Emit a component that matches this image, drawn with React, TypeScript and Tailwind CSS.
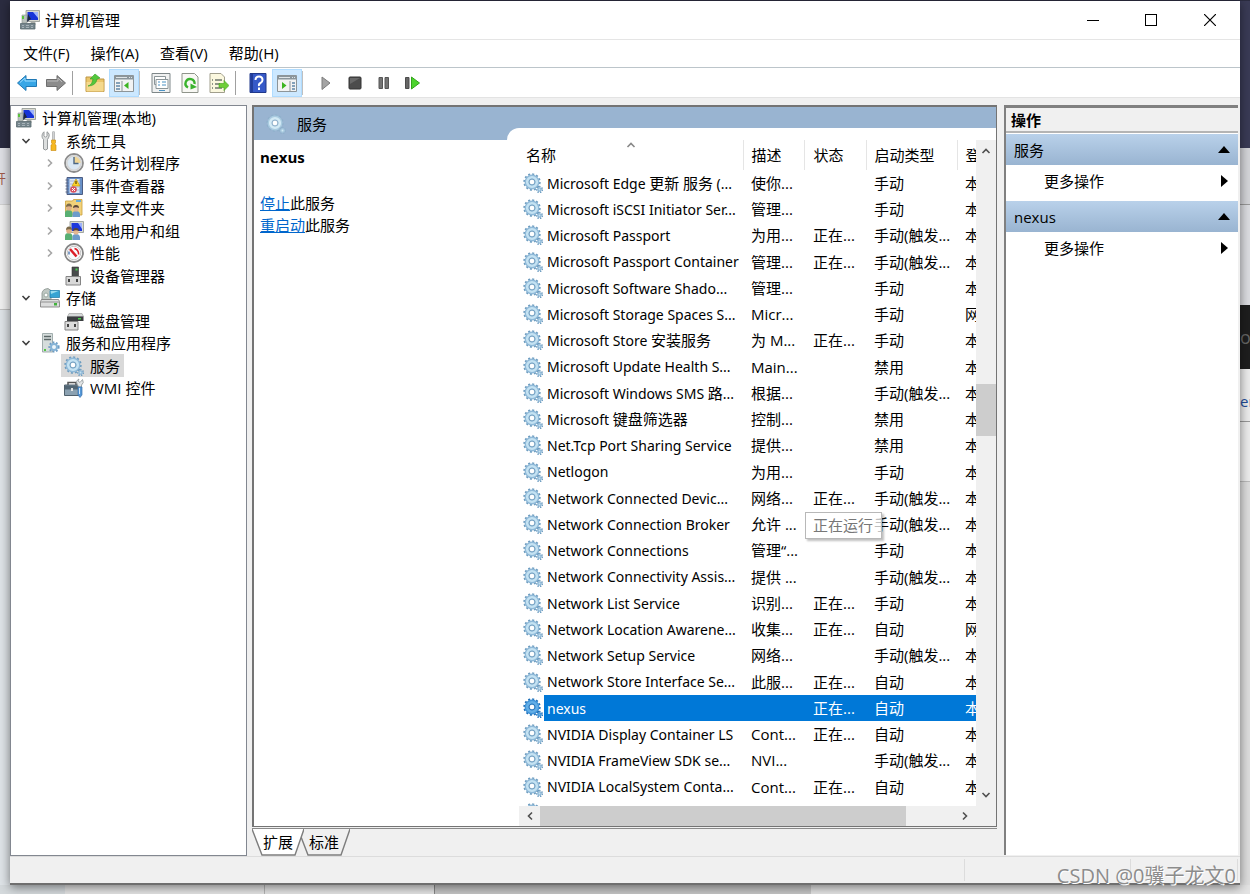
import type { ReactNode } from "react";

type TreeItem = {
  label: string;
  level: 0 | 1 | 2;
  icon: ReactNode;
  arrow?: "open" | "closed";
  selected?: boolean;
};

type Service = {
  name: string;
  description?: string;
  running?: boolean;
  startup: string;
  logon?: string;
  selected?: boolean;
  tooltip?: string;
};

function GearIcon({ tint = "#8fb9d8", ring = "#6d9cbf", face = "#c4e2f2" }) {
  return (
    <svg viewBox="0 0 20 20" className="block size-5">
      <circle cx="9" cy="9" r="7.7" fill="none" stroke={ring} strokeWidth="2" strokeDasharray="2 2.03" />
      <circle cx="9" cy="9" r="5.2" fill="none" stroke={tint} strokeWidth="4.4" />
      <circle cx="9" cy="9" r="4.8" fill="none" stroke={face} strokeWidth="2.6" />
      <circle cx="9" cy="9" r="2.9" fill="#fff" stroke={ring} strokeWidth="1" />
      <circle cx="16.500" cy="16.500" r="2.800" fill="none" stroke={ring} strokeWidth="1.8" strokeDasharray="1.3 1.2" />
      <circle cx="16.500" cy="16.500" r="1.600" fill={face} stroke={tint} strokeWidth="1.4" />
    </svg>
  );
}

function ComputerIcon() {
  return (
    <svg viewBox="0 0 20 20" className="block size-5">
      <path d="M6 0.5h13.5v11H6z" fill="#d8d8cf" stroke="#8f9690" strokeWidth="0.8" />
      <path d="M7.5 2h10.5v8H7.5z" fill="#1733d8" />
      <path d="M13 2h5v6z" fill="#9fb4fb" />
      <path d="M11 11.500h4l1 3h-6z" fill="#a8aca8" />
      <path d="M2 5h5v8H2z" fill="#b9c1bd" stroke="#8c9691" strokeWidth="0.6" />
      <path d="M2 6h2v3H2z" fill="#5ac23c" />
      <path d="M8 4l3 5-4 3z" fill="#1d2742" />
      <path d="M0.500 13.500h14.500v5.500H0.500z" fill="#75858c" stroke="#596970" strokeWidth="0.8" />
      <path d="M2 15.500h2M6 15.500h3M11 15.500h2M2 17.500h2M6 17.500h3M11 17.500h2" stroke="#a6b2b8" />
    </svg>
  );
}

function ToolsIcon() {
  return (
    <svg viewBox="0 0 20 20" className="block size-5">
      <path d="M4 0.800v4l1.500 1.500 1.500-1.500v-4c2 1 3 3.500 1.500 6L7.500 8.500V18q-2 2-4 0V8.500C1 6 2 2.500 4 0.800z" fill="#dcdede" stroke="#8b8f91" strokeWidth="0.9" />
      <path d="M13.500 0.500v9" stroke="#8b8f91" strokeWidth="2.2" />
      <path d="M13.500 1v8" stroke="#e3e3e3" strokeWidth="0.8" />
      <path d="M11.500 9h4v3l-1 1 1.500 1v5.500h-5V14l1.500-1-1-1z" fill="#f6b820" stroke="#c98a0a" strokeWidth="0.6" />
    </svg>
  );
}

function ClockIcon() {
  return (
    <svg viewBox="0 0 20 20" className="block size-5">
      <circle cx="10" cy="10" r="9" fill="#f2f7fb" stroke="#8c8c8c" strokeWidth="1.8" />
      <circle cx="10" cy="10" r="7.200" fill="#dbe8f3" stroke="#d5d5d5" strokeWidth="1.600" />
      <path d="M10 3.500a6.500 6.500 0 0 1 6.500 6.500H10z" fill="#f1d696" />
      <path d="M10 4v6.500h4.500" fill="none" stroke="#4b6784" strokeWidth="1.400" />
    </svg>
  );
}

function EventIcon() {
  return (
    <svg viewBox="0 0 20 20" className="block size-5">
      <path d="M3 1.500h15.500v17H3z" fill="#6890c7" stroke="#4c5d83" />
      <path d="M5.500 3h10v14h-10z" fill="#dfe7f5" />
      <path d="M6 5h9M6 8h9M6 11h9M6 14h9" stroke="#a9b8d6" />
      <path d="M1.500 4h3M1.500 7h3M1.500 10h3M1.500 13h3M1.500 16h3" stroke="#586784" />
      <path d="M12 3l4 7H8z" fill="#ffd42c" stroke="#bb9204" strokeWidth="0.600" />
      <path d="M12 5v3" stroke="#302500" />
      <circle cx="9.500" cy="13.500" r="3.300" fill="#d95360" />
      <path d="M8 12l3 3M11 12l-3 3" stroke="#fff" />
    </svg>
  );
}

function People() {
  return (
    <>
      <path d="M1 19v-4q0-3 3.500-3t4 3v4z" fill="#58af73" />
      <circle cx="5" cy="9.800" r="2.800" fill="#dfb087" />
      <path d="M2 9q0-3.500 3-3.500T8 9q-3-1.500-6 0z" fill="#7c6a4a" />
      <path d="M8.500 19v-3q0-3 3.500-3t4 3v3z" fill="#6c9bcb" />
      <circle cx="12" cy="11" r="2.600" fill="#e5b890" />
      <path d="M9 10q0-3 3-3t3 3q-3-1.300-6 0z" fill="#594639" />
    </>
  );
}

function SharedFolderIcon() {
  return (
    <svg viewBox="0 0 20 20" className="block size-5">
      <path d="M1.500 3h7l1-1.500h8.500V17H1.500z" fill="#f2d27a" stroke="#c99f3b" strokeWidth="0.800" />
      <path d="M12 2h5v2h-5z" fill="#67acd9" />
      <People />
    </svg>
  );
}

function UsersIcon() {
  return (
    <svg viewBox="0 0 20 20" className="block size-5">
      <path d="M6 0.500h13.500v11H6z" fill="#d7d9d2" stroke="#8f9690" strokeWidth="0.800" />
      <path d="M7.500 2H18v8H7.500z" fill="#1d38dc" />
      <path d="M14 2h4v6z" fill="#9fb2fa" />
      <People />
    </svg>
  );
}

function GaugeIcon() {
  return (
    <svg viewBox="0 0 20 20" className="block size-5">
      <circle cx="10" cy="10" r="9" fill="#fff" stroke="#858585" strokeWidth="1.800" />
      <circle cx="10" cy="10" r="6.800" fill="#f9fbfd" stroke="#c5c5c5" />
      <path d="M6 6l6.500 7.500" stroke="#dc1d27" strokeWidth="2.500" />
      <path d="M10.500 5.500q4 1 4.200 6" fill="none" stroke="#dc1d27" strokeWidth="1.600" />
      <path d="M5 8.500v3" stroke="#4b74ad" strokeWidth="1.400" />
    </svg>
  );
}

function DeviceIcon() {
  return (
    <svg viewBox="0 0 20 20" className="block size-5">
      <path d="M8 1h6.500v10H8z" fill="#484b4c" stroke="#333" strokeWidth="0.600" />
      <path d="M11.500 2.500h2v2h-2z" fill="#48d451" />
      <path d="M2 10.500h14.500v8.500H2z" fill="#d8d8d8" stroke="#858585" />
      <path d="M5 13v3M13 13v3" stroke="#333" strokeWidth="1.800" />
    </svg>
  );
}

function StorageIcon() {
  return (
    <svg viewBox="0 0 20 20" className="block size-5">
      <path d="M2 8q-1-7 6-7.500l3 2V12H2z" fill="#bfc8c3" stroke="#87918b" strokeWidth="0.800" />
      <circle cx="6" cy="7" r="2" fill="#fff" stroke="#9baaa2" />
      <path d="M10 2.500h9.500v7H10z" fill="#36a4d3" stroke="#187aa9" strokeWidth="0.700" />
      <path d="M10.500 3h8L11 6z" fill="#98dbed" />
      <path d="M1.500 11.500h17l1 2v5.500h-19v-5.500z" fill="#dcdddd" stroke="#777" strokeWidth="0.800" />
      <path d="M1 14h18" stroke="#929292" />
      <path d="M14 15h3v2.500h-3z" fill="#43b33d" />
    </svg>
  );
}

function DiskIcon() {
  return (
    <svg viewBox="0 0 20 20" className="block size-5">
      <path d="M5 2.500h13l1.500 3H3.500z" fill="#d5d8d8" stroke="#999" strokeWidth="0.600" />
      <path d="M3 5.500h16.500V10H3z" fill="#3b3e40" />
      <path d="M14 7h3v1.500h-3z" fill="#46ce48" />
      <path d="M1 10.500h13v8.500H1z" fill="#dcdcdc" stroke="#858585" />
      <path d="M4 13v3M11 13v3" stroke="#333" strokeWidth="1.800" />
    </svg>
  );
}

function ServerIcon() {
  return (
    <svg viewBox="0 0 20 20" className="block size-5">
      <path d="M2.500 0.500h10V19h-10z" fill="#d6dddc" stroke="#99a5a5" strokeWidth="0.900" />
      <path d="M4 3.500h7M4 6.500h7" stroke="#5b6767" strokeWidth="1.400" />
      <path d="M4 17h2" stroke="#50c642" strokeWidth="1.800" />
      <circle cx="14" cy="14" r="4.600" fill="none" stroke="#6b9bc4" strokeWidth="2" strokeDasharray="1.700 1.600" />
      <circle cx="14" cy="14" r="3" fill="#eef6fb" stroke="#85b3d6" strokeWidth="2" />
    </svg>
  );
}

function WmiIcon() {
  return (
    <svg viewBox="0 0 20 20" className="block size-5">
      <path d="M4 7V4.500h8V7" fill="none" stroke="#555" strokeWidth="1.500" />
      <path d="M0.500 7h16v10.500h-16z" fill="#8ba1b1" stroke="#50616d" />
      <path d="M1 7.500h15v4H1z" fill="#526674" />
      <path d="M7 10h2v3H7z" fill="#e5e5e5" />
      <path d="M18.500 1.500l-2.500 3-2-1.500 1-2q-4 2-1.500 5.500l1 2.500h3V7q3-2 1-5.500z" fill="#e2e5e6" stroke="#8f979b" strokeWidth="0.800" />
      <path d="M14 9h4v8l-2 2.500-2-2.500z" fill="#5598d8" stroke="#3970aa" strokeWidth="0.700" />
      <path d="M15.500 10v6" stroke="#d3e8fa" />
    </svg>
  );
}

function Chevron({ d, className }: { d: string; className?: string }) {
  return (
    <svg viewBox="0 0 10 10" className={`block size-[10px] ${className ?? ""}`}>
      <path d={d} fill="none" stroke="currentColor" strokeWidth="1.600" />
    </svg>
  );
}

const UP = "M1.500 7L5 3.500L8.500 7";
const DOWN = "M1.500 3L5 6.500L8.500 3";
const LEFT = "M7 1.500L3.500 5L7 8.500";
const RIGHT = "M3 1.500L6.500 5L3 8.500";

const tree: TreeItem[] = [
  { label: "计算机管理(本地)", level: 0, icon: <ComputerIcon /> },
  { label: "系统工具", level: 1, icon: <ToolsIcon />, arrow: "open" },
  { label: "任务计划程序", level: 2, icon: <ClockIcon />, arrow: "closed" },
  { label: "事件查看器", level: 2, icon: <EventIcon />, arrow: "closed" },
  { label: "共享文件夹", level: 2, icon: <SharedFolderIcon />, arrow: "closed" },
  { label: "本地用户和组", level: 2, icon: <UsersIcon />, arrow: "closed" },
  { label: "性能", level: 2, icon: <GaugeIcon />, arrow: "closed" },
  { label: "设备管理器", level: 2, icon: <DeviceIcon /> },
  { label: "存储", level: 1, icon: <StorageIcon />, arrow: "open" },
  { label: "磁盘管理", level: 2, icon: <DiskIcon /> },
  { label: "服务和应用程序", level: 1, icon: <ServerIcon />, arrow: "open" },
  { label: "服务", level: 2, icon: <GearIcon />, selected: true },
  { label: "WMI 控件", level: 2, icon: <WmiIcon /> },
];

const services: Service[] = [
  { name: "Microsoft Edge 更新 服务 (...", description: "使你...", startup: "手动" },
  { name: "Microsoft iSCSI Initiator Ser...", description: "管理...", startup: "手动" },
  { name: "Microsoft Passport", description: "为用...", running: true, startup: "手动(触发..." },
  { name: "Microsoft Passport Container", description: "管理...", running: true, startup: "手动(触发..." },
  { name: "Microsoft Software Shado...", description: "管理...", startup: "手动" },
  { name: "Microsoft Storage Spaces S...", description: "Micr...", startup: "手动", logon: "网" },
  { name: "Microsoft Store 安装服务", description: "为 M...", running: true, startup: "手动" },
  { name: "Microsoft Update Health S...", description: "Main...", startup: "禁用" },
  { name: "Microsoft Windows SMS 路...", description: "根据...", startup: "手动(触发..." },
  { name: "Microsoft 键盘筛选器", description: "控制...", startup: "禁用" },
  { name: "Net.Tcp Port Sharing Service", description: "提供...", startup: "禁用" },
  { name: "Netlogon", description: "为用...", startup: "手动" },
  { name: "Network Connected Devic...", description: "网络...", running: true, startup: "手动(触发..." },
  { name: "Network Connection Broker", description: "允许 ...", startup: "手动(触发...", tooltip: "正在运行" },
  { name: "Network Connections", description: "管理“...", startup: "手动" },
  { name: "Network Connectivity Assis...", description: "提供 ...", startup: "手动(触发..." },
  { name: "Network List Service", description: "识别...", running: true, startup: "手动" },
  { name: "Network Location Awarene...", description: "收集...", running: true, startup: "自动", logon: "网" },
  { name: "Network Setup Service", description: "网络...", startup: "手动(触发..." },
  { name: "Network Store Interface Se...", description: "此服...", running: true, startup: "自动" },
  { name: "nexus", running: true, startup: "自动", selected: true },
  { name: "NVIDIA Display Container LS", description: "Cont...", running: true, startup: "自动" },
  { name: "NVIDIA FrameView SDK se...", description: "NVI...", startup: "手动(触发..." },
  { name: "NVIDIA LocalSystem Conta...", description: "Cont...", running: true, startup: "自动" },
  { name: "Office 64 Source Engine", description: "保存...", startup: "手动(触发..." },
];

function TitleBar() {
  return (
    <header className="flex h-[39px] shrink-0 items-center border-b border-[#e5e5e5] bg-white pl-[10px]">
      <ComputerIcon />
      <h1 className="ml-[5px] flex-1">计算机管理</h1>
      <button aria-label="最小化" className="flex h-full w-[58px] items-center justify-center">
        <span className="h-px w-3 bg-black" />
      </button>
      <button aria-label="最大化" className="flex h-full w-[58px] items-center justify-center">
        <span className="size-3 border border-black" />
      </button>
      <button aria-label="关闭" className="flex h-full w-[60px] items-center justify-center">
        <svg viewBox="0 0 12 12" className="size-3">
          <path d="M0 0l12 12M12 0L0 12" stroke="#000" strokeWidth="1.200" />
        </svg>
      </button>
    </header>
  );
}

function MenuBar() {
  return (
    <nav className="flex h-7 shrink-0 items-center gap-[21px] border-b border-[#bcc5ca] bg-white pb-[2px] pl-[13px]">
      <button>文件(F)</button>
      <button>操作(A)</button>
      <button>查看(V)</button>
      <button>帮助(H)</button>
    </nav>
  );
}

function ToolButton({ label, active, children }: { label: string; active?: boolean; children: ReactNode }) {
  return (
    <button
      aria-label={label}
      className={`flex h-7 items-center justify-center border ${active ? "w-[30px] border-[#b0dcff] bg-[#cce8ff]" : "w-[29px] border-transparent"}`}
    >
      <svg viewBox="0 0 20 20" className="size-5">
        {children}
      </svg>
    </button>
  );
}

function Divider() {
  return <span className="mr-[7px] ml-[2px] h-6 w-px bg-[#a0a0a0]" />;
}

function PaneGlyph({ right }: { right?: boolean }) {
  return (
    <>
      <path d="M0.500 2.500h19v16h-19z" fill="#f2f3f3" stroke="#8d9599" />
      <path d="M1 3h18v3.500H1z" fill="#8b969c" />
      <path d="M2 4.500h11M15 4.500h1M17 4.500h1" stroke="#e0e5e7" />
      <path d={right ? "M13 8v10" : "M8 8v10"} stroke="#8d9599" />
      <path d={right ? "M15 10h3M15 13h3M15 16h3" : "M2 10h4M2 13h4M2 16h4"} stroke="#5f87a8" strokeWidth="1.300" />
      <path d={right ? "M5 9v7l4.500-3.500z" : "M14.500 9v7L10 12.500z"} fill="#3cb521" />
    </>
  );
}

function Toolbar() {
  return (
    <div className="flex h-[30px] shrink-0 items-center border-b border-[#e3e3e3] bg-white pl-[2px]">
      <ToolButton label="后退">
        <path d="M0.500 10L9 2.500v4h10.500v7H9v4z" fill="#37a6e6" stroke="#2078b4" />
        <path d="M3 9.500L8 5v3h11" fill="none" stroke="#9bdcff" />
      </ToolButton>
      <ToolButton label="前进">
        <path d="M19.500 10L11 2.500v4H0.500v7H11v4z" fill="#8c8c8c" stroke="#6e6e6e" />
        <path d="M1 8h11V5l4 4" fill="none" stroke="#bcbcbc" />
      </ToolButton>
      <Divider />
      <ToolButton label="向上">
        <path d="M1 4h6l2 2h10v12.500H1z" fill="#ebc66b" stroke="#bd9544" />
        <path d="M1.500 9h17v9.500h-17z" fill="#f4d98e" />
        <path d="M3 13q4-1 5-7H5l5-5 5 4-3 1q-1 7-9 7z" fill="#54c73c" stroke="#2f9e24" strokeWidth="0.600" />
      </ToolButton>
      <ToolButton label="显示/隐藏控制台树" active>
        <PaneGlyph />
      </ToolButton>
      <span className="mr-[6px] h-6 w-px bg-[#c0c0c0]" />
      <ToolButton label="属性">
        <path d="M1 0.500h18v19H1z" fill="#f0f1f1" stroke="#7e8789" />
        <path d="M3.500 3.500h11v8h-11z" fill="#fff" stroke="#8b9598" />
        <path d="M5 6.500h12v9H5z" fill="#fff" stroke="#8b9598" />
        <path d="M7 9h2M7 12h2M11 9h4M11 12h4M8 17.500h6" stroke="#4b92c4" />
      </ToolButton>
      <ToolButton label="刷新">
        <path d="M2 0.500h12.500l3.500 3.500v15.500H2z" fill="#f8f8f4" stroke="#8f948b" />
        <path d="M8 14.500A4.500 4.500 0 1 1 14.500 11" fill="none" stroke="#3ab32e" strokeWidth="2.400" />
        <path d="M10.500 16.500v-6l6.500 3.500z" fill="#3ab32e" />
      </ToolButton>
      <ToolButton label="导出列表">
        <path d="M1 0.500h11l3.500 3.500v15.500H1z" fill="#fbf8df" stroke="#a19f8d" />
        <path d="M3 7h1M6 7h7M3 11h1M6 11h5M3 15h1M6 15h7" stroke="#6f766e" strokeWidth="1.500" />
        <path d="M10 10.500h5v-3l5 5-5 5v-3h-5z" fill="#6fce38" stroke="#43a41e" strokeWidth="0.600" />
      </ToolButton>
      <Divider />
      <ToolButton label="帮助">
        <path d="M2 0.500h16v19H2z" fill="#3659c8" stroke="#20388b" />
        <path d="M2.500 1h2.500v18H2.500z" fill="#223d9a" />
        <path d="M7.500 7q0-3.500 3.500-3.500T14.500 7q0 2-2 3t-1.500 3M11 14.500v2.500" fill="none" stroke="#fff" strokeWidth="2" />
      </ToolButton>
      <ToolButton label="显示/隐藏操作窗格" active>
        <PaneGlyph right />
      </ToolButton>
      <span className="mr-2 h-6 w-px bg-[#c0c0c0]" />
      <ToolButton label="启动服务">
        <path d="M6 4l8 6-8 6.500z" fill="#a4a4a4" stroke="#7d7d7d" />
      </ToolButton>
      <ToolButton label="停止服务">
        <rect x="4" y="4" width="12" height="12" rx="1" fill="#4c4c4c" stroke="#333" />
        <path d="M5 5h10L5 11z" fill="#686868" />
      </ToolButton>
      <ToolButton label="暂停服务">
        <path d="M5 4.500h3.500v11H5zM11 4.500h3.500v11H11z" fill="#747474" stroke="#565656" />
      </ToolButton>
      <ToolButton label="重新启动服务">
        <path d="M2.500 4.500H6v11H2.500z" fill="#666" stroke="#4c4c4c" />
        <path d="M8.500 4l8 6-8 6z" fill="#4cd32d" stroke="#33a51b" />
      </ToolButton>
    </div>
  );
}

const indent = { 0: "pl-[2px]", 1: "pl-[7px]", 2: "pl-[31px]" };

function ConsoleTree() {
  return (
    <aside className="w-[237px] shrink-0 border border-[#828790] bg-white pt-px">
      <ul>
        {tree.map((item) => (
          <li key={item.label} className={`flex h-[22px] items-center gap-[3px] even:h-[23px] ${indent[item.level]}`}>
            {item.level > 0 && (
              <span className="flex w-4 justify-center">
                {item.arrow === "open" && <Chevron d={DOWN} className="text-[#404040]" />}
                {item.arrow === "closed" && <Chevron d={RIGHT} className="text-[#a6a6a6]" />}
              </span>
            )}
            <button className={`flex h-full items-center gap-[6px] pr-1 pl-[3px] ${item.selected ? "bg-[#d9d9d9]" : ""}`}>
              {item.icon}
              {item.label}
            </button>
          </li>
        ))}
      </ul>
    </aside>
  );
}

// Latin runs are set a little smaller than the Chinese ones
function ServiceName({ name }: { name: string }) {
  return name.split(/([\u4e00-\u9fff]+)/).map((part, i) => (
    <span key={i} className={i % 2 ? "" : "font-['Noto_Sans',sans-serif] text-[14px]"}>
      {part}
    </span>
  ));
}

function ServiceRow({ service }: { service: Service }) {
  const fill = service.selected ? "bg-[#0078d7] text-white" : "";
  return (
    <tr className="h-[26px] nth-[4n]:h-[27px]">
      <td className="pl-1">
        {service.selected ? <GearIcon tint="#3f93d8" ring="#1e6fb8" face="#63aee6" /> : <GearIcon />}
      </td>
      <td className={`pl-[3px] ${fill}`}>
        <ServiceName name={service.name} />
      </td>
      <td className={`pl-2 ${fill}`}>{service.description}</td>
      <td className={`relative pl-[9px] ${fill} ${service.tooltip ? "z-10" : ""}`}>
        {service.running && "正在..."}
        {service.tooltip && (
          <span
            role="tooltip"
            className="absolute top-px left-px h-[27px] w-[77px] border border-[#b8b8b8] bg-white/75 pl-[7px] leading-[25px] text-[#777] shadow-[2px_2px_2px_rgba(0,0,0,0.25)]"
          >
            {service.tooltip}
          </span>
        )}
      </td>
      <td className={`pl-2 ${fill}`}>{service.startup}</td>
      <td className={`overflow-hidden pl-2 ${fill}`}>{service.logon ?? "本"}</td>
    </tr>
  );
}

function ServiceList() {
  return (
    <div className="flex min-h-0 flex-1">
      <div className="flex min-w-0 flex-1 flex-col">
        <div className="min-h-0 flex-1 overflow-hidden">
          <table className="w-full table-fixed text-left whitespace-nowrap">
            <colgroup>
              <col className="w-[25px]" />
              <col />
              <col className="w-[61px]" />
              <col className="w-[62px]" />
              <col className="w-[91px]" />
              <col className="w-[19px]" />
            </colgroup>
            <thead>
              <tr className="h-[30px] *:border-r *:border-[#e5e5e5] *:font-normal">
                <th colSpan={2} className="relative pl-[7px]">
                  名称
                  <Chevron d={UP} className="absolute top-0 left-1/2 size-2 -translate-x-1/2 text-[#888]" />
                </th>
                <th className="pl-2">描述</th>
                <th className="pl-[9px]">状态</th>
                <th className="pl-2">启动类型</th>
                <th className="overflow-hidden border-none pl-2">登</th>
              </tr>
            </thead>
            <tbody>
              {services.map((service) => (
                <ServiceRow key={service.name} service={service} />
              ))}
            </tbody>
          </table>
        </div>
        <div className="flex h-[20px] shrink-0 bg-[#f0f0f0] text-[#505050]">
          <button aria-label="向左滚动" className="flex w-[21px] items-center justify-center">
            <Chevron d={LEFT} />
          </button>
          <div className="flex flex-1">
            <span className="grow-[366] bg-[#cdcdcd]" />
            <span className="grow-[47]" />
          </div>
          <button aria-label="向右滚动" className="flex w-[23px] items-center justify-center">
            <Chevron d={RIGHT} />
          </button>
        </div>
      </div>
      <div className="flex w-[20px] shrink-0 flex-col bg-[#f0f0f0] pb-[20px] text-[#505050]">
        <button aria-label="向上滚动" className="flex h-[22px] items-center justify-center">
          <Chevron d={UP} />
        </button>
        <div className="flex flex-1 flex-col">
          <span className="grow-[222]" />
          <span className="h-[52px] bg-[#cdcdcd]" />
          <span className="grow-[348]" />
        </div>
        <button aria-label="向下滚动" className="flex h-[22px] items-center justify-center">
          <Chevron d={DOWN} />
        </button>
      </div>
    </div>
  );
}

function ViewTab({ label, active }: { label: string; active?: boolean }) {
  return (
    <button className={`relative h-[27px] w-[52px] pb-[2px] ${active ? "z-10" : "-ml-[6px]"}`}>
      <svg viewBox="0 0 52 27" className="absolute inset-0 size-full">
        <path d="M0 0L10 26H43L52 0" fill={active ? "#fff" : "#f0f0f0"} stroke="#7d7d7d" strokeWidth="1.400" />
      </svg>
      <span className="relative">{label}</span>
    </button>
  );
}

function ResultPane() {
  return (
    <section className="mr-[2px] flex min-w-0 flex-1 flex-col">
      <div className="flex min-h-0 flex-1 border-t-2 border-r border-b border-l-2 border-[#747474] bg-white">
        <div className="w-[253px] shrink-0">
          <h2 className="flex h-[33px] items-center gap-[11px] bg-[#99b4d1] pl-3">
            <GearIcon tint="#a9cbe0" ring="#8fb0cb" face="#d3eaf5" />
            服务
          </h2>
          <div className="pt-[6px] pl-[6px] leading-[22px]">
            <h3 className="mb-[24px] font-bold">nexus</h3>
            <p>
              <a href="#stop" className="text-[#0066cc] underline">停止</a>此服务
            </p>
            <p>
              <a href="#restart" className="text-[#0066cc] underline">重启动</a>此服务
            </p>
          </div>
        </div>
        <div className="flex min-w-0 flex-1 flex-col bg-[#99b4d1] pt-[21px]">
          <div className="flex min-h-0 flex-1 flex-col rounded-tl-[12px] bg-white pt-3 pl-3">
            <ServiceList />
          </div>
        </div>
      </div>
      <div className="mt-px flex h-7 shrink-0 border-t border-[#8a8a8a]">
        <ViewTab label="扩展" active />
        <ViewTab label="标准" />
      </div>
    </section>
  );
}

function ActionGroup({ title }: { title: string }) {
  return (
    <section className="mb-[5px]">
      <h3 className="flex h-[31px] items-center justify-between bg-linear-to-b from-[#b9d1ea] to-[#99b4d1] px-2">
        {title}
        <svg viewBox="0 0 12 7" className="h-[7px] w-3">
          <path d="M0 7L6 0l6 7z" />
        </svg>
      </h3>
      <button className="flex h-[31px] w-full items-center justify-between pr-[10px] pl-[38px]">
        更多操作
        <svg viewBox="0 0 7 12" className="h-3 w-[7px]">
          <path d="M0 0l7 6-7 6z" />
        </svg>
      </button>
    </section>
  );
}

function ActionsPane() {
  return (
    <aside className="mr-[2px] mb-[1px] w-[234px] shrink-0 border-t-[3px] border-l-2 border-[#808080] bg-white">
      <h2 className="mb-px h-[25px] border-b-2 border-[#b4b4b4] bg-[#f0f0f0] pl-[5px] leading-[24px] font-bold">操作</h2>
      <ActionGroup title="服务" />
      <ActionGroup title="nexus" />
    </aside>
  );
}

function StatusBar() {
  return (
    <footer className="flex h-[27px] shrink-0 justify-end border-t border-[#dcdcdc] bg-[#f0f0f0] py-[2px] pr-[2px]">
      <span className="w-[166px] border-l border-[#dcdcdc]" />
      <span className="w-[108px] border-x border-[#dcdcdc]" />
    </footer>
  );
}

export default function App() {
  return (
    <div className="relative flex h-screen flex-col overflow-hidden bg-[#2b2c40] pt-px font-['Open_Sans','Noto_Sans_CJK_SC',sans-serif] text-[15px] leading-[20px] text-black">
      <div className="flex min-h-0 flex-1">
        <div className="flex w-[10px] shrink-0 flex-col overflow-hidden">
          <div className="h-[147px] bg-[#2b2c40]" />
          <div className="flex h-[57px] items-center justify-end border-b border-[#d0d0d0] bg-[#dfe0e5] pt-1 text-[13px] text-[#a05a48]">
            <span className="shrink-0 pr-1">开</span>
          </div>
          <div className="h-[105px] border-b border-[#bfbfbf] bg-[#f0f0f0]" />
          <div className="flex-1 bg-[#dfe4e8]" />
        </div>
        <main className="z-10 flex min-w-0 flex-1 flex-col border-b-2 border-[#6f6f6f] bg-[#f0f0f0] shadow-[0_2px_10px_rgba(0,0,0,0.5)]">
          <TitleBar />
          <MenuBar />
          <Toolbar />
          <div className="flex min-h-0 flex-1 gap-[5px] pt-[7px]">
            <ConsoleTree />
            <ResultPane />
            <ActionsPane />
          </div>
          <StatusBar />
        </main>
        <div className="flex w-[10px] shrink-0 flex-col overflow-hidden">
          <div className="h-[147px] bg-[#3a3b56]" />
          <div className="h-[57px] border-b border-[#999] bg-[#d4d5d9]" />
          <div className="h-[100px] bg-[#dcdde1]" />
          <div className="h-[64px] bg-[#1e1e1e] text-[18px] leading-[64px] text-[#666]">o</div>
          <div className="h-[53px] border-b border-[#999] bg-[#ececec] leading-[64px] text-[#234e9c]">er</div>
          <div className="h-[60px] border-b border-[#bbb] bg-[#ececec]" />
          <div className="flex-1 bg-[#dedede]" />
        </div>
      </div>
      <div className="flex h-[9px] shrink-0 bg-[#e4e4e4]">
        <span className="w-[65px] bg-[#d5dadd]" />
        <span className="w-[200px] border-r border-[#b5b5b5]" />
        <span className="w-[170px] border-r border-[#888]" />
        <span className="w-[376px] bg-[#c6c6c6]" />
      </div>
      <p className="absolute right-[14px] bottom-[5px] z-20 text-[20px] leading-[26px] text-[#8c8c8c] [text-shadow:1px_1px_0_#fff]">
        CSDN @0骥子龙文0
      </p>
    </div>
  );
}
